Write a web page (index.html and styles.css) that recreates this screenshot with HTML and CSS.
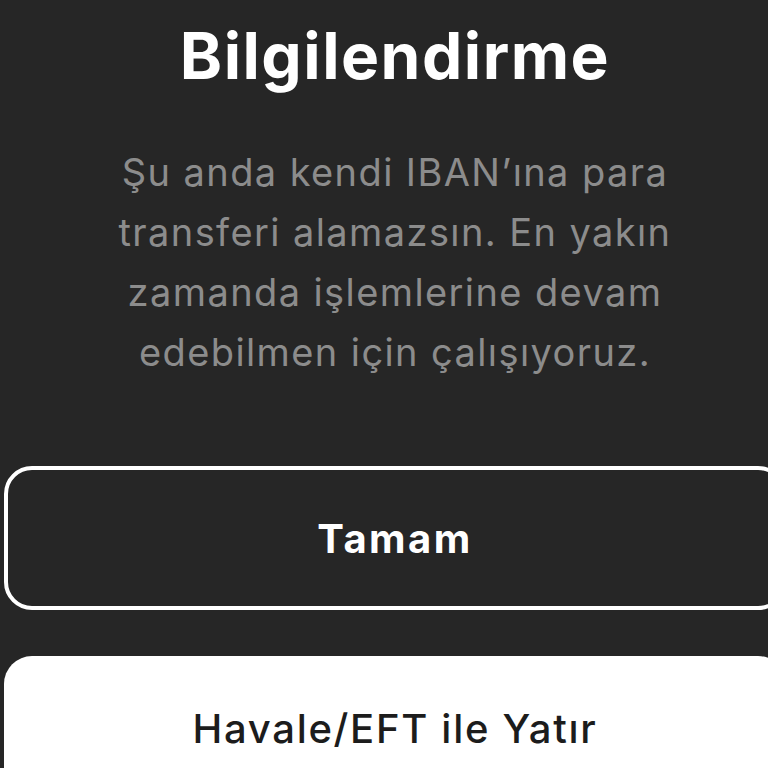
FILE: index.html
```html
<!DOCTYPE html>
<html lang="tr">
<head>
    <meta charset="UTF-8">
    <meta name="viewport" content="width=device-width, initial-scale=1.0">
    <title>Bilgilendirme</title>
    <link rel="stylesheet" href="styles.css">
</head>
<body>
    <div class="sheet">
        <h1 class="title">Bilgilendirme</h1>
        <p class="message">Şu anda kendi IBAN’ına para transferi alamazsın. En yakın zamanda işlemlerine devam edebilmen için çalışıyoruz.</p>

        <div class="actions">
            <button class="btn btn-outline">Tamam</button>
            <button class="btn btn-solid">Havale/EFT ile Yatır</button>
        </div>
    </div>
</body>
</html>
```

FILE: styles.css
```css
html, body {
    background-color: #262626;
}

body {
    margin: 0;
    font-family: Inter, "Noto Sans", sans-serif;
    overflow: hidden;
}

/* Sayfa biraz sağa taşıyor, butonlar ekranın dışına uzanıyor */
.sheet {
    display: flex;
    flex-direction: column;
    align-items: center;
    width: 782px;
    margin-left: 4px;
    padding-top: 16px;
}

.title {
    margin: 0;
    color: #ffffff;
    font-size: 64px;
    font-weight: 700;
    line-height: 80px;
    letter-spacing: 1.5px;
}

.message {
    margin: 46px 0 0;
    max-width: 600px;
    color: #8c8c8c;
    font-size: 38px;
    line-height: 60px;
    letter-spacing: 1.4px;
    text-align: center;
}

.actions {
    display: flex;
    flex-direction: column;
    gap: 46px;
    width: 100%;
    margin-top: 84px;
}

.btn {
    display: block;
    width: 100%;
    height: 144px;
    border-radius: 28px;
    font-family: inherit;
    font-size: 40px;
    cursor: pointer;
}

.btn-outline {
    background-color: #262626;
    color: #ffffff;
    border: 4px solid #ffffff;
    font-weight: 700;
    letter-spacing: 2.5px;
}

.btn-solid {
    background-color: #ffffff;
    color: #1c1c1c;
    border: none;
    font-weight: 500;
    letter-spacing: 1.7px;
}
```
